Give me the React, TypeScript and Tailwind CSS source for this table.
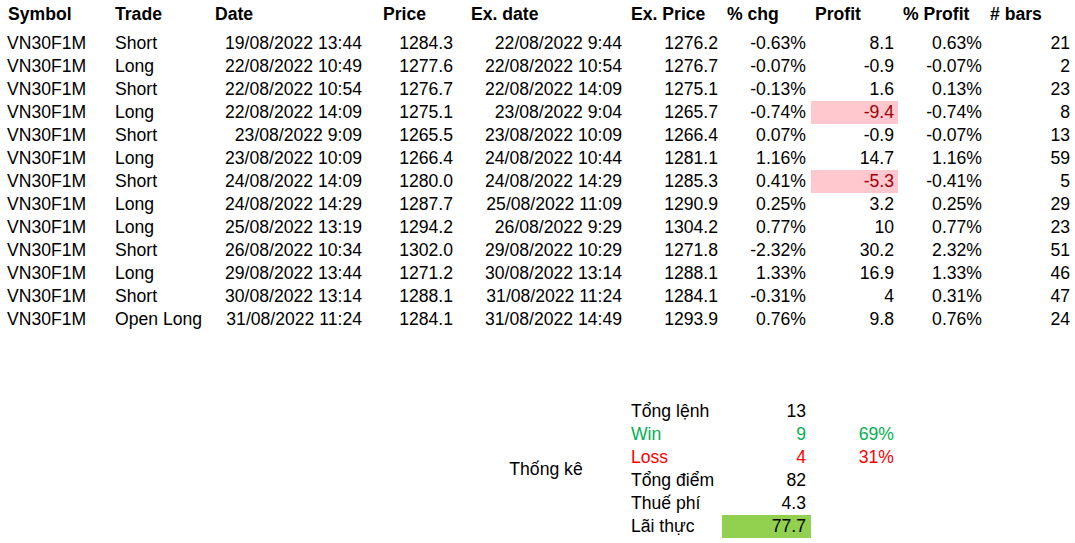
const cols = "grid grid-cols-[107px_100px_160px_90px_170px_95px_89px_87px_89px_88px]";

type Trade = {
  trade: string;
  date: string;
  price: string;
  exDate: string;
  exPrice: string;
  chg: string;
  profit: string;
  pctProfit: string;
  bars: string;
  loss?: boolean;
};

const trades: Trade[] = [
  { trade: "Short", date: "19/08/2022 13:44", price: "1284.3", exDate: "22/08/2022 9:44", exPrice: "1276.2", chg: "-0.63%", profit: "8.1", pctProfit: "0.63%", bars: "21" },
  { trade: "Long", date: "22/08/2022 10:49", price: "1277.6", exDate: "22/08/2022 10:54", exPrice: "1276.7", chg: "-0.07%", profit: "-0.9", pctProfit: "-0.07%", bars: "2" },
  { trade: "Short", date: "22/08/2022 10:54", price: "1276.7", exDate: "22/08/2022 14:09", exPrice: "1275.1", chg: "-0.13%", profit: "1.6", pctProfit: "0.13%", bars: "23" },
  { trade: "Long", date: "22/08/2022 14:09", price: "1275.1", exDate: "23/08/2022 9:04", exPrice: "1265.7", chg: "-0.74%", profit: "-9.4", pctProfit: "-0.74%", bars: "8", loss: true },
  { trade: "Short", date: "23/08/2022 9:09", price: "1265.5", exDate: "23/08/2022 10:09", exPrice: "1266.4", chg: "0.07%", profit: "-0.9", pctProfit: "-0.07%", bars: "13" },
  { trade: "Long", date: "23/08/2022 10:09", price: "1266.4", exDate: "24/08/2022 10:44", exPrice: "1281.1", chg: "1.16%", profit: "14.7", pctProfit: "1.16%", bars: "59" },
  { trade: "Short", date: "24/08/2022 14:09", price: "1280.0", exDate: "24/08/2022 14:29", exPrice: "1285.3", chg: "0.41%", profit: "-5.3", pctProfit: "-0.41%", bars: "5", loss: true },
  { trade: "Long", date: "24/08/2022 14:29", price: "1287.7", exDate: "25/08/2022 11:09", exPrice: "1290.9", chg: "0.25%", profit: "3.2", pctProfit: "0.25%", bars: "29" },
  { trade: "Long", date: "25/08/2022 13:19", price: "1294.2", exDate: "26/08/2022 9:29", exPrice: "1304.2", chg: "0.77%", profit: "10", pctProfit: "0.77%", bars: "23" },
  { trade: "Short", date: "26/08/2022 10:34", price: "1302.0", exDate: "29/08/2022 10:29", exPrice: "1271.8", chg: "-2.32%", profit: "30.2", pctProfit: "2.32%", bars: "51" },
  { trade: "Long", date: "29/08/2022 13:44", price: "1271.2", exDate: "30/08/2022 13:14", exPrice: "1288.1", chg: "1.33%", profit: "16.9", pctProfit: "1.33%", bars: "46" },
  { trade: "Short", date: "30/08/2022 13:14", price: "1288.1", exDate: "31/08/2022 11:24", exPrice: "1284.1", chg: "-0.31%", profit: "4", pctProfit: "0.31%", bars: "47" },
  { trade: "Open Long", date: "31/08/2022 11:24", price: "1284.1", exDate: "31/08/2022 14:49", exPrice: "1293.9", chg: "0.76%", profit: "9.8", pctProfit: "0.76%", bars: "24" },
];

export default function App() {
  return (
    <div className="w-[1075px] h-[543px] bg-white text-black text-[17.6px] leading-[23px] font-['Liberation_Sans',Arial,sans-serif] overflow-hidden">
      {/* header */}
      <div className={`${cols} h-[32px] pt-[3px] font-bold whitespace-nowrap`}>
        <div className="pl-[8px]">Symbol</div>
        <div className="pl-[8px]">Trade</div>
        <div className="pl-[8px]">Date</div>
        <div className="pl-[16px]">Price</div>
        <div className="pl-[14px]">Ex. date</div>
        <div className="pl-[4px]">Ex. Price</div>
        <div className="pl-[5px]">% chg</div>
        <div className="pl-[4px]">Profit</div>
        <div className="pl-[5px]">% Profit</div>
        <div className="pl-[3px]"># bars</div>
      </div>

      {trades.map((t, i) => (
        <div key={i} className={`${cols} h-[23px] whitespace-nowrap`}>
          <div className="pl-[7px]">VN30F1M</div>
          <div className="pl-[8px]">{t.trade}</div>
          <div className="text-right pr-[5px]">{t.date}</div>
          <div className="text-right pr-[4px]">{t.price}</div>
          <div className="text-right pr-[5px]">{t.exDate}</div>
          <div className="text-right pr-[4px]">{t.exPrice}</div>
          <div className="text-right pr-[5px]">{t.chg}</div>
          <div className={`text-right pr-[4px] ${t.loss ? "bg-[#ffc7ce] text-[#9c0006]" : ""}`}>{t.profit}</div>
          <div className="text-right pr-[5px]">{t.pctProfit}</div>
          <div className="text-right pr-[5px]">{t.bars}</div>
        </div>
      ))}

      <div className="h-[69px]" />

      {/* stats */}
      <div className={`${cols} grid-rows-[repeat(6,23px)] whitespace-nowrap`}>
        <div className="col-start-5 row-start-1 row-span-6 flex items-center justify-center pl-[8px]">Thống kê</div>

        <div className="col-start-6 row-start-1 pl-[4px]">Tổng lệnh</div>
        <div className="col-start-7 row-start-1 text-right pr-[5px]">13</div>

        <div className="col-start-6 row-start-2 pl-[4px] text-[#00b050]">Win</div>
        <div className="col-start-7 row-start-2 text-right pr-[5px] text-[#00b050]">9</div>
        <div className="col-start-8 row-start-2 text-right pr-[4px] text-[#00b050]">69%</div>

        <div className="col-start-6 row-start-3 pl-[4px] text-[#ff0000]">Loss</div>
        <div className="col-start-7 row-start-3 text-right pr-[5px] text-[#ff0000]">4</div>
        <div className="col-start-8 row-start-3 text-right pr-[4px] text-[#ff0000]">31%</div>

        <div className="col-start-6 row-start-4 pl-[4px]">Tổng điểm</div>
        <div className="col-start-7 row-start-4 text-right pr-[5px]">82</div>

        <div className="col-start-6 row-start-5 pl-[4px]">Thuế phí</div>
        <div className="col-start-7 row-start-5 text-right pr-[5px]">4.3</div>

        <div className="col-start-6 row-start-6 pl-[4px]">Lãi thực</div>
        <div className="col-start-7 row-start-6 text-right pr-[5px] bg-[#92d050]">77.7</div>
      </div>
    </div>
  );
}
